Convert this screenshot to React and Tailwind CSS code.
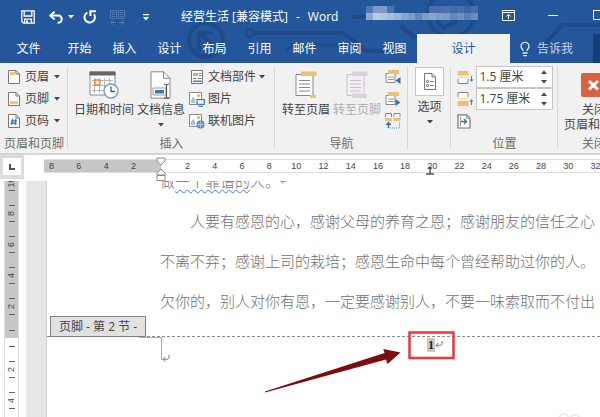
import { useState } from "react";
import { Lightbulb } from "lucide-react";

const TABS = ["开始", "插入", "设计", "布局", "引用", "邮件", "审阅", "视图"];

const LEFT_MARKS = [8, 6, 4, 2];
const RIGHT_MARKS = [2, 4, 6, 8, 10, 12, 14, 16, 18, 20, 22, 24, 26, 28, 30, 32];

// Blocks hiding the account name: [x, y, fill]
const NAME_BLOCKS = [
  [0, 0, "#4f77b1"], [7, 0, "#7d9ac8"], [14, 0, "#7d9ac8"], [21, 0, "#4a72ae"],
  [0, 7, "#8fa8d0"], [7, 7, "#b9c9e3"], [14, 7, "#b3c4e0"], [21, 7, "#a7bbdb"],
  [28, 7, "#9cb2d7"], [35, 7, "#8aa4ce"], [42, 7, "#7f9bc8"], [49, 7, "#6286bb"],
  [56, 7, "#7f9bc8"], [63, 7, "#8aa4ce"], [70, 7, "#7f9bc8"], [77, 7, "#7d99c6"],
  [84, 7, "#6286bb"], [91, 7, "#6f90c1"], [98, 7, "#5a7fb6"], [105, 7, "#6a8cbf"],
  [63, 0, "#466eab"], [70, 0, "#466eab"], [77, 0, "#4a72ae"], [84, 0, "#416aa8"],
  [91, 0, "#466eab"], [98, 0, "#3a64a4"], [105, 0, "#466eab"],
];

function Caret({ className = "" }) {
  return (
    <svg width="6" height="4" viewBox="0 0 6 4" className={`shrink-0 ${className}`}>
      <path d="M0 0h6L3 3.6z" fill="currentColor" />
    </svg>
  );
}

function Circuit() {
  return (
    <svg className="absolute left-0 top-0" width="600" height="63" fill="none" stroke="#1f4b89" strokeWidth="4">
      <circle cx="206" cy="40" r="17" />
      <path d="M199 52V33h14M200 33l12 12" />
      <circle cx="250" cy="33" r="4" strokeWidth="3" />
      <path d="M255 33h88l24 18h26" />
      <path d="M286 51l6-6h62l10 6" strokeWidth="3" />
      <path d="M352 17h14" />
      <circle cx="451" cy="14" r="23" strokeDasharray="30 6" />
      <path d="M436 20l8 8 14-8M400 26l16 12" />
      <path d="M538 52l24-27h38" />
    </svg>
  );
}

function SaveIcon() {
  return (
    <svg width="14" height="14" viewBox="0 0 14 14" fill="none" stroke="#fff" strokeWidth="1.3">
      <path d="M.8.8h12.4v12.4H2.6L.8 11.4z" />
      <path d="M3.2 1v5h7.6V1" />
      <path d="M3.6 13V9.2h6.8V13" />
      <path d="M5 10.5h2V13H5z" fill="#fff" stroke="none" />
    </svg>
  );
}

function UndoIcon() {
  return (
    <svg width="14" height="13" viewBox="0 0 14 13" fill="none" stroke="#fff" strokeWidth="2">
      <path d="M5.6.8L1.4 4.6l4.2 3.8" />
      <path d="M1.8 4.6h7.4c5 0 4.6 7.2-.6 7.2" />
    </svg>
  );
}

function RedoIcon() {
  return (
    <svg width="14" height="14" viewBox="0 0 14 14" fill="none" stroke="#fff" strokeWidth="2">
      <path d="M4.4 2.6A5.2 5.2 0 1 0 11 4.4" />
      <path d="M7.4 6V1.2H13" />
    </svg>
  );
}

function CompareIcon() {
  return (
    <svg width="15" height="17" viewBox="0 0 15 17" fill="none" stroke="#5479b2" strokeWidth="1">
      <path d="M.5 1.5h6v8h-6zM8.5 1.5h6v8h-6zM2 3.5h3M2 5.5h3M2 7.5h3M10 3.5h3M10 5.5h3M10 7.5h3" />
      <path d="M6 13.500H1M3.500 11L1 13.500 3.500 16M9 13.500h5M11.500 11l2.500 2.500-2.500 2.500" />
    </svg>
  );
}

function PageIcon({ kind }) {
  return (
    <svg width="12" height="14" viewBox="0 0 12 14" fill="none">
      <path d="M.5.500h7.500l3.500 3.500v9.500H.5z" fill="#fff" stroke="#777" />
      <path d="M8 .5V4h3.500" stroke="#777" />
      {kind === "header" && <path d="M2 2h5v3H2z" fill="#ecc27d" />}
      {kind === "footer" && <path d="M2 9h8v3H2z" fill="#ecc27d" />}
      {kind === "number" && (
        <path d="M4.500 5L3.800 11M7.800 5L7.100 11M2.800 6.800h6.200M2.600 9.200h6.200" stroke="#2f74b8" strokeWidth="1.2" />
      )}
    </svg>
  );
}

function CalendarIcon() {
  return (
    <svg width="30" height="28" viewBox="0 0 30 28" fill="none">
      <path d="M1 1h25v23H1z" fill="#fff" stroke="#888" />
      <path d="M.5.500h26v4H.5z" fill="#666" />
      <path d="M3 9.500h21M3 14.500h21M3 19.500h12M5.500 7v15M10.500 7v15M15.500 7v15M20.500 7v8" stroke="#b5b5b5" />
      <path d="M6 9h5v5H6z" fill="#fff" stroke="#e8833a" strokeWidth="1.4" />
      <circle cx="22" cy="20" r="7" fill="#fff" stroke="#6c9fd2" strokeWidth="1.4" />
      <path d="M22 15.500V20.500h4" stroke="#555" strokeWidth="1.3" />
    </svg>
  );
}

function DocInfoIcon() {
  return (
    <svg width="22" height="28" viewBox="0 0 22 28" fill="none">
      <path d="M1 .8h12.500l6.500 6.500v19.900H1z" fill="#fff" stroke="#888" />
      <path d="M13.500 .8v6.500H20" stroke="#888" />
      <path d="M3 17h13v7H3z" fill="#fff" stroke="#999" />
      <path d="M5 19h9v3.500H5z" fill="#3c78b5" />
      <path d="M16.500 14v12M14 13c1.500 0 2.500.5 2.500 1.500 0-1 1-1.500 2.500-1.500M14 27.200c1.500 0 2.500-.5 2.500-1.500 0 1 1 1.500 2.500 1.500" stroke="#555" strokeWidth="1.200" />
    </svg>
  );
}

function PartsIcon() {
  return (
    <svg width="16" height="15" viewBox="0 0 16 15" fill="none">
      <path d="M2.500.500h11v13h-11z" fill="#fff" stroke="#777" />
      <path d="M4 3h5v3H4z" fill="#e9a55b" />
      <path d="M10 3.500h2.500M10 5.500h2.500M4 8.500h3M8.500 8.500h4" stroke="#777" />
      <path d="M4 10.500h8.500V12H4z" fill="#3c84c6" />
    </svg>
  );
}

function PictureIcon({ online }) {
  return (
    <svg width="16" height="15" viewBox="0 0 16 15" fill="none">
      <path d="M.5.500h12v12H.5z" fill="#fff" stroke="#888" />
      <circle cx="9.500" cy="3.500" r="1.500" fill="#ecb05f" />
      <path d="M2 11V8l2-3 2 2v4z" fill="#9fc3e6" />
      {online ? (
        <>
          <circle cx="11.500" cy="10.500" r="4" fill="#3c84c6" />
          <path d="M8 10.500h7M11.500 7v7M9.500 8c1 2 1 3 0 5M13.500 8c-1 2-1 3 0 5" stroke="#cfe2f4" strokeWidth=".6" />
        </>
      ) : (
        <>
          <path d="M8 7.700h7.300v4.600H8z" fill="#fff" stroke="#3c84c6" strokeWidth="1.300" />
          <path d="M9.500 14.200h4.500" stroke="#3c84c6" strokeWidth="1.300" />
        </>
      )}
    </svg>
  );
}

function GotoIcon({ footer }) {
  const line = footer ? "#cbc3cb" : "#888";
  const accent = footer ? "#d9d4d9" : "#ecc171";
  return (
    <svg width="22" height="28" viewBox="0 0 22 28" fill="none">
      <path d="M1 3.500h17v21H1z" fill={footer ? "#f3eef3" : "#fff"} stroke={line} />
      <path d="M4 9.500h11M4 13h11M4 16.500h11M4 20h11" stroke={line} />
      <path d="M6 .5h15.500v4.500H6z" fill={accent} />
      <path d={footer ? "M6 22.500h15v4.500H6z" : "M15 24h6v3H15z"} fill={accent} />
    </svg>
  );
}

function SectionIcon({ kind }) {
  if (kind === "link") {
    return (
      <svg width="16" height="16" viewBox="0 0 16 16" fill="none">
        <path d="M.5 4V.5h6V4M9 4V.5h6V4" fill="#fff" stroke="#888" />
        <path d="M0 5h7v3H0zM8.500 5h7v3h-7z" fill="#ecc171" />
        <path d="M3.500 10v5" stroke="#2f74b8" strokeWidth="1.500" />
        <path d="M.5 12l3-3.500 3 3.500z" fill="#2f74b8" />
        <path d="M5 15h9.500V9" stroke="#5a94cd" strokeDasharray="1 1" />
      </svg>
    );
  }
  return (
    <svg width="16" height="16" viewBox="0 0 16 16" fill="none">
      <path d="M1 4.500h9v9H1z" fill="#fff" stroke="#888" />
      <path d="M3 8h6M3 10.500h6" stroke="#999" />
      <path d="M3 1h11v4H3z" fill="#ecc171" />
      <path d={kind === "prev" ? "M15.500 8v7l-5-3.500z" : "M10.500 8v7l5-3.500z"} fill="#2f74b8" />
    </svg>
  );
}

function DistanceIcon({ bottom }) {
  return (
    <svg width="17" height="15" viewBox="0 0 17 15" fill="none">
      {bottom ? (
        <>
          <path d="M1 5V.5h10V5" fill="#fff" stroke="#888" />
          <path d="M1 6.500h10" stroke="#e9c48a" strokeDasharray="1 1" />
          <path d="M.5 9h11v5H.5z" fill="#ecc171" />
          <path d="M14.500 13V8.500" stroke="#3c84c6" />
          <path d="M12.500 9.500l2-2.500 2 2.500z" fill="#3c84c6" />
        </>
      ) : (
        <>
          <path d="M.5 1h11v4.500H.5z" fill="#ecc171" />
          <path d="M1 7.500h10" stroke="#e9c48a" strokeDasharray="1 1" />
          <path d="M1 9v4.500h10V9" fill="#fff" stroke="#888" />
          <path d="M14.500 6v4" stroke="#3c84c6" />
          <path d="M12.500 9.500l2 2.500 2-2.500z" fill="#3c84c6" />
        </>
      )}
    </svg>
  );
}

function AlignTabIcon() {
  return (
    <svg width="14" height="15" viewBox="0 0 14 15" fill="none">
      <path d="M1 .8h8.500L13 4.300v9.700H1z" fill="#fff" stroke="#777" strokeWidth="1.200" />
      <path d="M9.500 1v3.500H13M3.500 2.500v10" stroke="#999" />
      <path d="M4 7.500h5.500M7 5l2.500 2.500L7 10" stroke="#2f74b8" strokeWidth="1.400" />
    </svg>
  );
}

function OptionsIcon() {
  return (
    <svg width="12" height="17" viewBox="0 0 12 17" fill="none" stroke="#777">
      <path d="M.5.500h7.500l3.500 3.500v12.500H.5z" fill="#fff" />
      <path d="M8 .5V4h3.500M6 8.500h3.500M6 12.500h3.500" />
      <path d="M2.500 7.500h2v2h-2zM2.500 11.500h2v2h-2z" strokeWidth=".8" />
    </svg>
  );
}

function ReturnMark({ className = "" }) {
  return (
    <svg width="8" height="8" viewBox="0 0 8 8" fill="none" stroke="#777" className={`shrink-0 ${className}`}>
      <path d="M7 0v2.500c0 1.200-.8 1.800-2 1.800H1M3.200 2L1 4.300l2.200 2.200" />
    </svg>
  );
}

function Group({ title, className = "", children }) {
  return (
    <section
      aria-label={title}
      className={`relative flex shrink-0 flex-col items-center after:absolute after:right-0 after:top-1 after:bottom-1 after:w-px after:bg-[#d5d5d5] ${className}`}
    >
      <div className="flex h-[72px] w-full justify-center">{children}</div>
      <div className="text-[#6a6a6a] leading-[18px]">{title}</div>
    </section>
  );
}

function SmallButton({ icon, label, menu, gap = "gap-[5px]" }) {
  return (
    <button type="button" className={`flex h-[22px] items-center ${gap}`}>
      {icon}
      <span>{label}</span>
      {menu && <Caret />}
    </button>
  );
}

function BigButton({ icon, label, menu, disabled }) {
  return (
    <button
      type="button"
      disabled={disabled}
      className="flex shrink-0 flex-col items-center whitespace-nowrap disabled:text-[#b0abb0]"
    >
      <span className="flex h-7 items-center">{icon}</span>
      <span className="mt-[2px] leading-[18px]">{label}</span>
      {menu && <Caret className="mt-[4px]" />}
    </button>
  );
}

function DistanceField({ id, label, bottom, value, onChange }) {
  return (
    <div className="flex h-[22px] items-center gap-[2px]">
      <label htmlFor={id} aria-label={label}>
        <DistanceIcon bottom={bottom} />
      </label>
      <div className="flex h-[22px] w-[77px] items-center border border-[#c6c6c6] bg-white pl-[3px] pr-[5px]">
        <input
          id={id}
          value={value}
          onChange={(e) => onChange(e.target.value)}
          className="w-full min-w-0 bg-transparent text-[#444] outline-none"
        />
        <div className="flex flex-col gap-[6px]">
          <button type="button" aria-label="增大">
            <Caret className="block rotate-180" />
          </button>
          <button type="button" aria-label="减小">
            <Caret className="block" />
          </button>
        </div>
      </div>
    </div>
  );
}

function TitleBar() {
  return (
    <div className="relative flex h-[34px] items-center">
      <div className="flex shrink-0 items-center pl-[21px]">
        <button type="button" aria-label="保存"><SaveIcon /></button>
        <button type="button" aria-label="撤消" className="ml-[14px]"><UndoIcon /></button>
        <Caret className="ml-[5px]" />
        <button type="button" aria-label="恢复" className="ml-[9px]"><RedoIcon /></button>
        <button type="button" aria-label="并排查看" disabled className="ml-[13px]"><CompareIcon /></button>
        <button type="button" aria-label="自定义快速访问工具栏" className="ml-[18px]">
          <svg width="6" height="7" viewBox="0 0 6 7">
            <path d="M0 0h6v1.200H0zM0 3h6L3 6.500z" fill="#fff" />
          </svg>
        </button>
      </div>
      <h1 className="ml-8 flex shrink-0 gap-2 whitespace-nowrap">
        <span>经营生活 [兼容模式]</span>
        <span>-</span>
        <span>Word</span>
      </h1>
      <svg className="ml-7 mb-2 shrink-0" width="112" height="14">
        {NAME_BLOCKS.map(([x, y, fill]) => (
          <rect key={`${x}-${y}`} x={x} y={y} width="7" height="7" fill={fill} />
        ))}
      </svg>
      <div className="ml-6 mb-1 flex shrink-0 items-center">
        <button type="button" aria-label="功能区显示选项">
          <svg width="13" height="11" viewBox="0 0 13 11" fill="none" stroke="#fff">
            <path d="M.5.500h12v10H.5zM.5 2.500h12M6.500 9V4.500M4.300 6.500l2.200-2.200 2.200 2.200" />
          </svg>
        </button>
        <button type="button" aria-label="最小化" className="ml-[33px]">
          <svg width="10" height="10" viewBox="0 0 10 10" stroke="#fff">
            <path d="M0 5.500h10" />
          </svg>
        </button>
        <button type="button" aria-label="最大化" className="ml-[35px]">
          <svg width="10" height="10" viewBox="0 0 10 10" fill="none" stroke="#fff">
            <path d="M.5.500h9v9h-9z" />
          </svg>
        </button>
      </div>
    </div>
  );
}

function TabBar() {
  return (
    <nav className="relative flex h-[29px] whitespace-nowrap">
      <button type="button" className="w-[57px] shrink-0">文件</button>
      {TABS.map((t) => (
        <button key={t} type="button" className="w-[45px] shrink-0">
          {t}
        </button>
      ))}
      <button type="button" aria-current="page" className="w-[93px] shrink-0 bg-[#f1f1f1] text-[#24569c]">
        设计
      </button>
      <button type="button" className="ml-[7px] flex shrink-0 items-center gap-1 text-[#c9d6ea]">
        <Lightbulb size={16} strokeWidth={2} className="text-[#e4ebf5]" />
        告诉我
      </button>
      <div className="ml-5 w-20 shrink-0 bg-[#153f77]" />
    </nav>
  );
}

function Ribbon() {
  const [top, setTop] = useState("1.5 厘米");
  const [bottom, setBottom] = useState("1.75 厘米");

  return (
    <div className="flex overflow-hidden border-b-2 border-[#d6d6d6] bg-[#f1f1f1] whitespace-nowrap text-[#444]">
      <Group title="页眉和页脚" className="w-[68px]">
        <div className="flex w-full flex-col pt-[3px] pl-2">
          <SmallButton icon={<PageIcon kind="header" />} label="页眉" menu />
          <SmallButton icon={<PageIcon kind="footer" />} label="页脚" menu />
          <SmallButton icon={<PageIcon kind="number" />} label="页码" menu />
        </div>
      </Group>

      <Group title="插入" className="w-[207px]">
        <div className="flex w-full gap-1 pl-[6px]">
          <div className="flex gap-[3px] pt-2">
            <BigButton icon={<CalendarIcon />} label="日期和时间" />
            <BigButton icon={<DocInfoIcon />} label="文档信息" menu />
          </div>
          <div className="flex flex-col pt-[3px]">
            <SmallButton icon={<PartsIcon />} label="文档部件" menu gap="gap-[3px]" />
            <SmallButton icon={<PictureIcon />} label="图片" gap="gap-[3px]" />
            <SmallButton icon={<PictureIcon online />} label="联机图片" gap="gap-[3px]" />
          </div>
        </div>
      </Group>

      <Group title="导航" className="w-[133px]">
        <div className="flex gap-[3px] pt-2">
          <BigButton icon={<GotoIcon />} label="转至页眉" />
          <BigButton icon={<GotoIcon footer />} label="转至页脚" disabled />
        </div>
        <div className="flex flex-col gap-[6px] pt-[6px] pl-1">
          <button type="button" aria-label="上一节"><SectionIcon kind="prev" /></button>
          <button type="button" aria-label="下一节"><SectionIcon kind="next" /></button>
          <button type="button" aria-label="链接到前一节"><SectionIcon kind="link" /></button>
        </div>
      </Group>

      <Group title="" className="w-[43px]">
        <button type="button" className="flex flex-col items-center pt-1">
          <span className="flex h-[29px] w-[29px] items-center justify-center border border-[#c6c6c6] bg-white">
            <OptionsIcon />
          </span>
          <span className="mt-[2px] leading-[18px]">选项</span>
          <Caret className="mt-[4px]" />
        </button>
      </Group>

      <Group title="位置" className="w-[107px]">
        <div className="flex flex-col pt-[3px]">
          <DistanceField id="top" label="页眉顶端距离" value={top} onChange={setTop} />
          <DistanceField id="bottom" label="页脚底端距离" bottom value={bottom} onChange={setBottom} />
          <button type="button" aria-label="插入对齐制表位" className="flex h-[22px] items-center">
            <AlignTabIcon />
          </button>
        </div>
      </Group>

      <Group title="关闭" className="w-[72px]">
        <button type="button" className="flex flex-col items-center pt-[10px]">
          <svg width="25" height="24" viewBox="0 0 25 24" className="shrink-0">
            <rect width="25" height="24" rx="2" fill="#dc6141" />
            <path d="M8 8l9 8.500M17 8l-9 8.500" stroke="#fff" strokeWidth="3" />
          </svg>
          <span className="mt-[5px] leading-[15px]">关闭</span>
          <span className="leading-[15px]">页眉和页脚</span>
        </button>
      </Group>
    </div>
  );
}

function HorizontalRuler() {
  return (
    <div className="flex h-6 items-start">
      <div className="flex h-full w-6 shrink-0 justify-center bg-[#dcdcdc] pt-[3px]">
        <div className="flex h-[17px] w-[18px] items-center justify-center bg-white">
          <svg width="6" height="6" viewBox="0 0 6 6" fill="none" stroke="#555" strokeWidth="2">
            <path d="M1 0v5h5" />
          </svg>
        </div>
      </div>
      <div className="relative mt-1 ml-5 flex h-[14px] flex-1 items-center border-y border-[#dedede] text-[9px] leading-3 font-['Liberation_Sans',sans-serif] text-[#444]">
        <div className="flex h-full w-[117px] shrink-0 items-center bg-[#c6c6c6] pl-[5px]">
          <div className="flex w-[87px] justify-between">
            {LEFT_MARKS.map((n) => (
              <span key={n}>{n}</span>
            ))}
          </div>
        </div>
        <div className="ml-[13px] flex w-[435px] shrink-0">
          {RIGHT_MARKS.map((n) => (
            <span key={n} className="flex-1 text-center">
              {n}
            </span>
          ))}
        </div>
        {/* indent markers and centre tab stop */}
        <svg className="absolute -top-[3px] left-28" width="10" height="26" viewBox="0 0 10 26" fill="#fff" stroke="#888">
          <path d="M1 1h8v3L5 8 1 4zM5 12l4 4v2H1v-2zM1 18.500h8v5H1z" />
        </svg>
        <svg className="absolute top-[7px] left-[382px]" width="8" height="8" viewBox="0 0 8 8" fill="none" stroke="#555" strokeWidth="1.500">
          <path d="M4 0v7M0 7h8M2 1h4" />
        </svg>
      </div>
    </div>
  );
}

function Tick() {
  return <span className="h-px w-[6px] bg-[#666]" />;
}

function VerticalCell({ n }) {
  return (
    <div className="flex h-[31px] shrink-0 flex-col items-center justify-between py-[7px]">
      <Tick />
      <span className="-rotate-90 leading-[9px]">{n}</span>
      <Tick />
    </div>
  );
}

function HalfCell() {
  return (
    <div className="flex h-4 shrink-0 items-center justify-center">
      <Tick />
    </div>
  );
}

function VerticalRuler() {
  return (
    <div className="ml-1 w-[15px] shrink-0 border-x border-[#dedede] text-[9px] font-['Liberation_Sans',sans-serif] text-[#444]">
      <div className="flex h-[157px] flex-col justify-end overflow-hidden bg-[#c6c6c6]">
        {[10, 8, 6, 4, 2].map((n) => (
          <VerticalCell key={n} n={n} />
        ))}
        <HalfCell />
      </div>
      <HalfCell />
      {[2, 4].map((n) => (
        <VerticalCell key={n} n={n} />
      ))}
    </div>
  );
}

function Page() {
  return (
    <main className="relative min-w-0 flex-1 overflow-hidden border-l border-[#cfcfcf] bg-white">
      <div className="h-[135px] overflow-hidden pl-[113px] whitespace-nowrap text-[15px] leading-10 font-['Noto_Sans_CJK_SC',sans-serif] font-light text-[#707070]">
        <p className="-mt-5 flex items-center">
          <span>
            做<span className="underline decoration-[#3b78f0] decoration-wavy decoration-1 underline-offset-2">一个靠谱的</span>人。
          </span>
          <ReturnMark />
        </p>
        <p className="indent-[30px]">人要有感恩的心，感谢父母的养育之恩；感谢朋友的信任之心</p>
        <p>不离不弃；感谢上司的栽培；感恩生命中每个曾经帮助过你的人。</p>
        <p>欠你的，别人对你有恩，一定要感谢别人，不要一味索取而不付出</p>
      </div>

      {/* footer area */}
      <div className="flex border-b border-dashed border-[#8a8a8a] pl-[3px]">
        <div className="-mb-px h-[21px] border border-[#808080] bg-[#e1e1e1] px-2 leading-[19px] text-[#444]">
          页脚 - 第 2 节 -
        </div>
      </div>
      <div className="flex items-start pl-[92px]">
        <div className="h-[23px] w-[23px] border-t border-r border-[#aaa]" />
        <ReturnMark className="mt-[18px]" />
        <div className="ml-[257px] flex items-center pt-px">
          <span className="bg-[#c8c8c8] px-px text-[12px] leading-[14px] font-bold font-['Liberation_Serif',serif] text-[#222]">
            1
          </span>
          <ReturnMark />
        </div>
      </div>

      <svg className="absolute top-[150px] left-[218px]" width="192" height="64" viewBox="0 0 192 64">
        <path d="M0 60.500L119.500 22 118.300 18l17.200 3.500-13 11.500-1.500-4.500L0 61.500z" fill="#7d0c0f" />
        <path d="M144.500 1.500h44v25.500h-44z" fill="none" stroke="#f33338" strokeWidth="2.500" />
      </svg>

      {/* faint watermark at the bottom edge */}
      <svg className="absolute top-[231px] left-[511px]" width="24" height="12" viewBox="0 0 24 12" fill="none" stroke="#ececec" strokeWidth="2">
        <circle cx="6" cy="7" r="5" />
        <circle cx="17" cy="8" r="5" />
      </svg>
    </main>
  );
}

export default function App() {
  return (
    <div className="flex min-h-screen flex-col overflow-hidden bg-white text-[12px] leading-[18px] font-['Open_Sans','Noto_Sans_CJK_SC',sans-serif]">
      <header className="relative overflow-hidden bg-[#24569c] text-white">
        <Circuit />
        <TitleBar />
        <TabBar />
      </header>
      <Ribbon />
      <HorizontalRuler />
      <div className="flex flex-1 pt-[2px]">
        <VerticalRuler />
        <div className="ml-[7px] w-5 shrink-0 bg-[#e6e6e6]" />
        <Page />
      </div>
    </div>
  );
}
